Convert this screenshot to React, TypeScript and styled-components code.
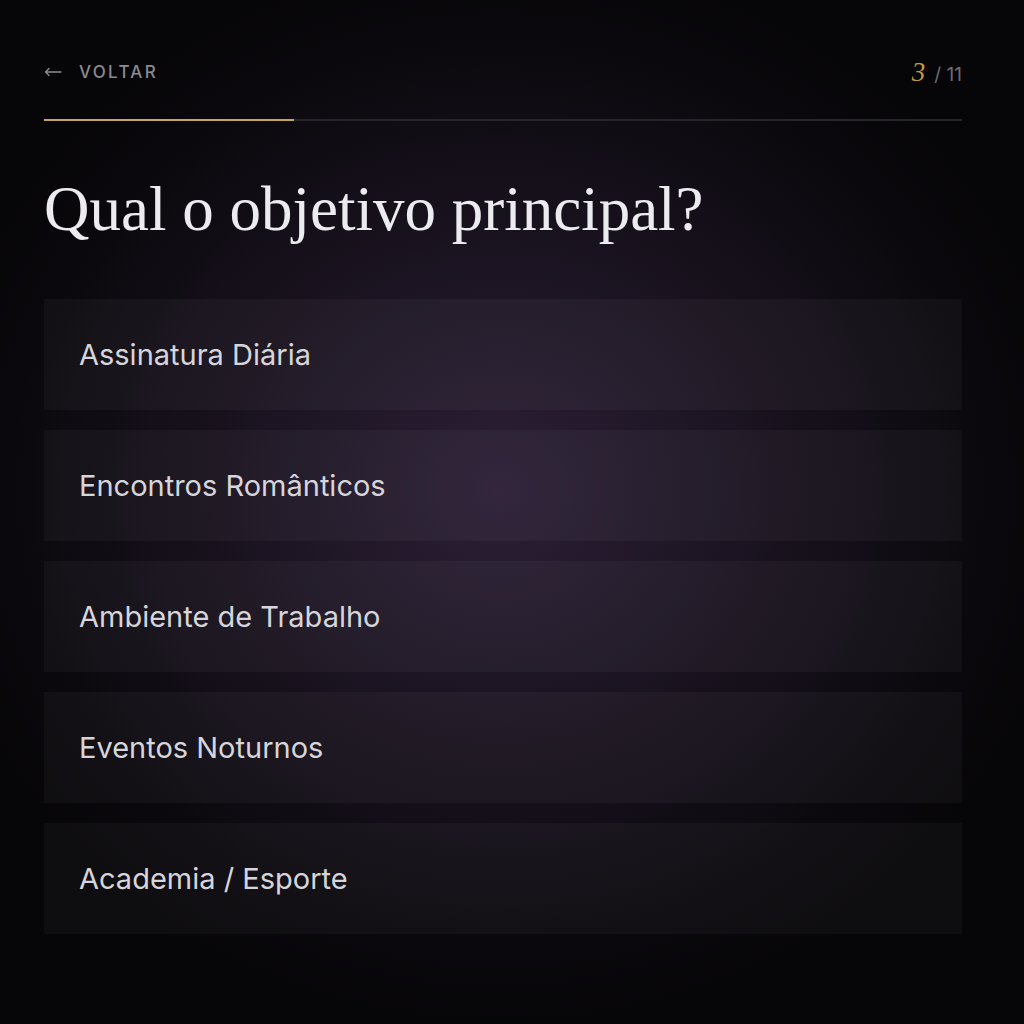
import styled, { createGlobalStyle } from 'styled-components'

const GlobalStyle = createGlobalStyle`
  html, body {
    margin: 0;
    padding: 0;
    background: #070609;
  }
  * {
    box-sizing: border-box;
  }
`

const Screen = styled.div`
  width: 1024px;
  height: 1024px;
  padding: 58px 62px 0 44px;
  background:
    radial-gradient(ellipse 580px 540px at 500px 490px, #2c1f36 0%, #1a1320 45%, #0a080c 85%, #060508 100%);
  display: flex;
  flex-direction: column;
  font-family: Inter, 'Noto Sans', sans-serif;
`

const TopBar = styled.div`
  display: flex;
  justify-content: space-between;
  align-items: center;
  height: 28px;
`

const BackButton = styled.button`
  display: flex;
  align-items: center;
  gap: 17px;
  background: none;
  border: none;
  padding: 0;
  color: #8b8a92;
  font-family: Inter, sans-serif;
  font-size: 17px;
  font-weight: 500;
  letter-spacing: 2.3px;
  text-transform: uppercase;
  cursor: pointer;
`

const Counter = styled.div`
  display: flex;
  align-items: baseline;
  gap: 9px;
  color: #6d6c74;
  font-size: 19px;
`

const Current = styled.span`
  font-family: 'Liberation Serif', serif;
  font-style: italic;
  font-size: 27px;
  color: #c49a3c;
`

const Track = styled.div`
  margin-top: 33px;
  height: 2px;
  background: #26252b;
  width: 918px;
`

const Fill = styled.div`
  height: 100%;
  background: #c4a658;
`

const Title = styled.h1`
  margin: 57px 0 0;
  font-family: 'Liberation Serif', serif;
  font-weight: 400;
  font-size: 63px;
  line-height: 1;
  color: #ecebef;
`

const Options = styled.div`
  margin-top: 58px;
  display: flex;
  flex-direction: column;
  gap: 20px;
  width: 918px;
`

const Option = styled.button`
  height: 111px;
  display: flex;
  align-items: center;
  padding: 0 35px;
  background: rgba(255, 255, 255, 0.035);
  border: none;
  color: #d6d5db;
  font-family: Inter, sans-serif;
  font-size: 29px;
  font-weight: 400;
  text-align: left;
  cursor: pointer;
`

const options = [
  'Assinatura Diária',
  'Encontros Românticos',
  'Ambiente de Trabalho',
  'Eventos Noturnos',
  'Academia / Esporte',
]

const BackArrow = () => (
  <svg width="18" height="10" viewBox="0 0 18 10" fill="none">
    <path d="M17 5H1.5M5 1.5L1.5 5L5 8.5" stroke="currentColor" strokeWidth="1.4" strokeLinecap="round" strokeLinejoin="round" />
  </svg>
)

const App = () => {
  const step = 3
  const total = 11

  return (
    <>
      <GlobalStyle />
      <Screen>
        <TopBar>
          <BackButton>
            <BackArrow />
            Voltar
          </BackButton>
          <Counter>
            <Current>{step}</Current>/ {total}
          </Counter>
        </TopBar>
        <Track>
          <Fill style={{ width: `${(step / total) * 100}%` }} />
        </Track>
        <Title>Qual o objetivo principal?</Title>
        <Options>
          {options.map((o) => (
            <Option key={o}>{o}</Option>
          ))}
        </Options>
      </Screen>
    </>
  )
}

export default App
